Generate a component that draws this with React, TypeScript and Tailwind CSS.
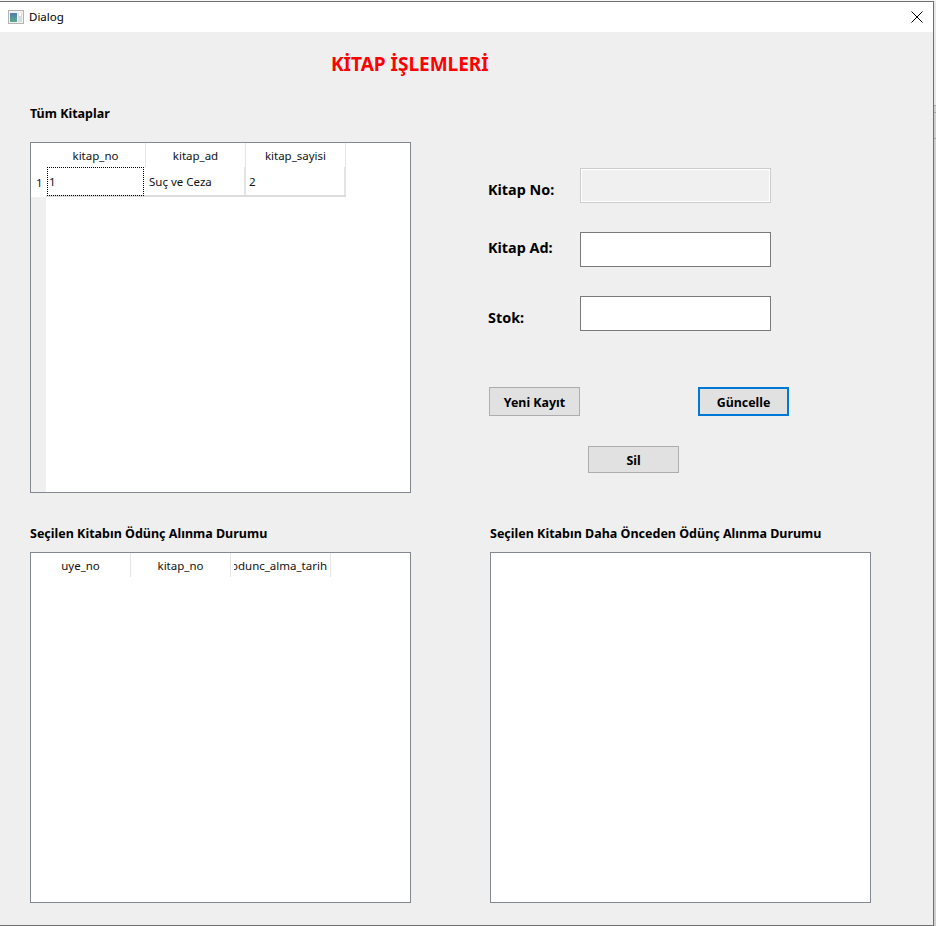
const font = "font-['Noto_Sans','Open_Sans',sans-serif]";

const WindowIcon = () => (
  <svg width="16" height="14" viewBox="0 0 16 14" shapeRendering="crispEdges">
    <defs>
      <linearGradient id="pane" x1="0" y1="0" x2="0" y2="1">
        <stop offset="0" stopColor="#4d7fae" />
        <stop offset="1" stopColor="#5fa88a" />
      </linearGradient>
    </defs>
    <rect x="0.5" y="0.5" width="15" height="13" fill="#f2f2f2" stroke="#b4b4b4" />
    <rect x="2" y="3" width="7" height="9" fill="url(#pane)" />
    <rect x="10" y="3" width="4" height="9" fill="#d5dde2" />
    <rect x="11" y="3" width="2" height="3" fill="#ffffff" />
  </svg>
);

const CloseIcon = () => (
  <svg width="12" height="12" viewBox="0 0 12 12" fill="none" stroke="#000" strokeWidth="1">
    <path d="M0.5 0.5 L11.5 11.5 M11.5 0.5 L0.5 11.5" />
  </svg>
);

const HeaderCell = ({ label }: { label: string }) => (
  <div className="h-6 w-[100px] shrink-0 border-r border-[#e5e5e5] bg-white px-[3px]">
    <div className="flex justify-center overflow-hidden">
      <span className="whitespace-nowrap leading-[25px]">{label}</span>
    </div>
  </div>
);

const Panel = ({ children }: { children?: React.ReactNode }) => (
  <div className="h-[351px] w-[381px] overflow-hidden border border-[#828790] bg-white text-[11.5px] text-[#111]">
    {children}
  </div>
);

const FormRow = ({ label, labelClass, disabled }: { label: string; labelClass: string; disabled?: boolean }) => (
  <div className="flex h-[35px] items-center">
    <span className={`w-[92px] text-[14.4px] font-bold text-black ${labelClass}`}>{label}</span>
    {disabled ? (
      <div className="h-[35px] w-[191px] border border-[#cccccc] bg-[#f0f0f0] shadow-[inset_0_0_0_1px_#ffffff]" />
    ) : (
      <div className="h-[35px] w-[191px] border border-[#7a7a7a] bg-white" />
    )}
  </div>
);

const Button = ({ label, focused, className }: { label: string; focused?: boolean; className: string }) => (
  <button
    className={`flex w-[91px] items-center justify-center bg-[#e1e1e1] pt-[3px] text-[12.4px] font-bold text-black ${
      focused ? 'border-2 border-[#0078d7]' : 'border border-[#adadad]'
    } ${className}`}
  >
    {label}
  </button>
);

export default function App() {
  return (
    <div className={`flex h-[926px] w-[936px] bg-[#f6f6f6] pt-px ${font}`}>
      <div className="h-[925px] w-[934px] border-r border-b border-t border-[#6f6f6f] bg-[#efefef]">
        {/* Title bar */}
        <div className="flex h-[30px] items-center bg-white pl-2 pr-[10px] text-[11.5px] text-black">
          <WindowIcon />
          <span className="ml-[5px] flex-1">Dialog</span>
          <CloseIcon />
        </div>

        <h1 className="mt-[18px] h-[28px] pl-[331px] text-[19px] leading-[28px] font-bold text-[#ff0000]">
          KİTAP İŞLEMLERİ
        </h1>

        <div className="flex h-[417px] pl-[30px]">
          <div>
            <h2 className="mt-[27px] h-[18px] text-[12.5px] leading-[18px] font-bold text-black">Tüm Kitaplar</h2>
            <div className="mt-[19px]">
              <Panel>
                <div className="flex h-full w-full">
                  <div className="flex w-[15px] shrink-0 flex-col bg-[#f0f0f0]">
                    <div className="h-6 bg-white" />
                    <div className="h-[30px] bg-white pt-[8px] pl-[5px] leading-[16px] text-[#2b0a4a]">1</div>
                  </div>
                  <div>
                    <div className="flex">
                      <HeaderCell label="kitap_no" />
                      <HeaderCell label="kitap_ad" />
                      <HeaderCell label="kitap_sayisi" />
                    </div>
                    <div className="flex h-[30px] border-b-2 border-[#dcdcdc] leading-[30px]">
                      <div className="ml-px h-[29px] w-[97px] border border-dotted border-black pl-[1px] leading-[28px]">1</div>
                      <div className="w-[102px] border-r-2 border-[#e4e4e4] pl-[5px]">Suç ve Ceza</div>
                      <div className="w-[100px] border-r-2 border-[#e4e4e4] pl-[3px]">2</div>
                    </div>
                  </div>
                </div>
              </Panel>
            </div>
          </div>

          {/* Form */}
          <div className="ml-[77px] w-[310px] pt-[90px]">
            <div className="flex flex-col gap-[29px]">
              <FormRow label="Kitap No:" labelClass="pt-[9px]" disabled />
              <FormRow label="Kitap Ad:" labelClass="pb-[3px]" />
              <FormRow label="Stok:" labelClass="pt-[8px]" />
            </div>
            <div className="mt-[56px] flex justify-between pl-px pr-[9px]">
              <Button label="Yeni Kayıt" className="h-[29px]" />
              <Button label="Güncelle" focused className="h-[29px]" />
            </div>
            <div className="mt-[30px] pl-[100px]">
              <Button label="Sil" className="h-[27px]" />
            </div>
          </div>
        </div>

        <div className="mt-[30px] flex gap-[79px] pl-[30px]">
          <div>
            <h2 className="h-[18px] text-[12.5px] leading-[18px] font-bold text-black">Seçilen Kitabın Ödünç Alınma Durumu</h2>
            <div className="mt-[9px]">
              <Panel>
                <div className="flex">
                  <HeaderCell label="uye_no" />
                  <HeaderCell label="kitap_no" />
                  <HeaderCell label="odunc_alma_tarihi" />
                </div>
              </Panel>
            </div>
          </div>
          <div>
            <h2 className="h-[18px] text-[12.5px] leading-[18px] font-bold text-black">Seçilen Kitabın Daha Önceden Ödünç Alınma Durumu</h2>
            <div className="mt-[9px]">
              <Panel />
            </div>
          </div>
        </div>
      </div>

      {/* Sliver of the window behind the dialog */}
      <div className="h-full w-[2px] bg-[#d0d0d0]">
        <div className="h-[104px] bg-[#e8e8e8]" />
        <div className="h-[8px] border-t border-b border-[#a8a8a8]" />
        <div className="h-[26px] border-b border-[#a8a8a8]" />
      </div>
    </div>
  );
}
